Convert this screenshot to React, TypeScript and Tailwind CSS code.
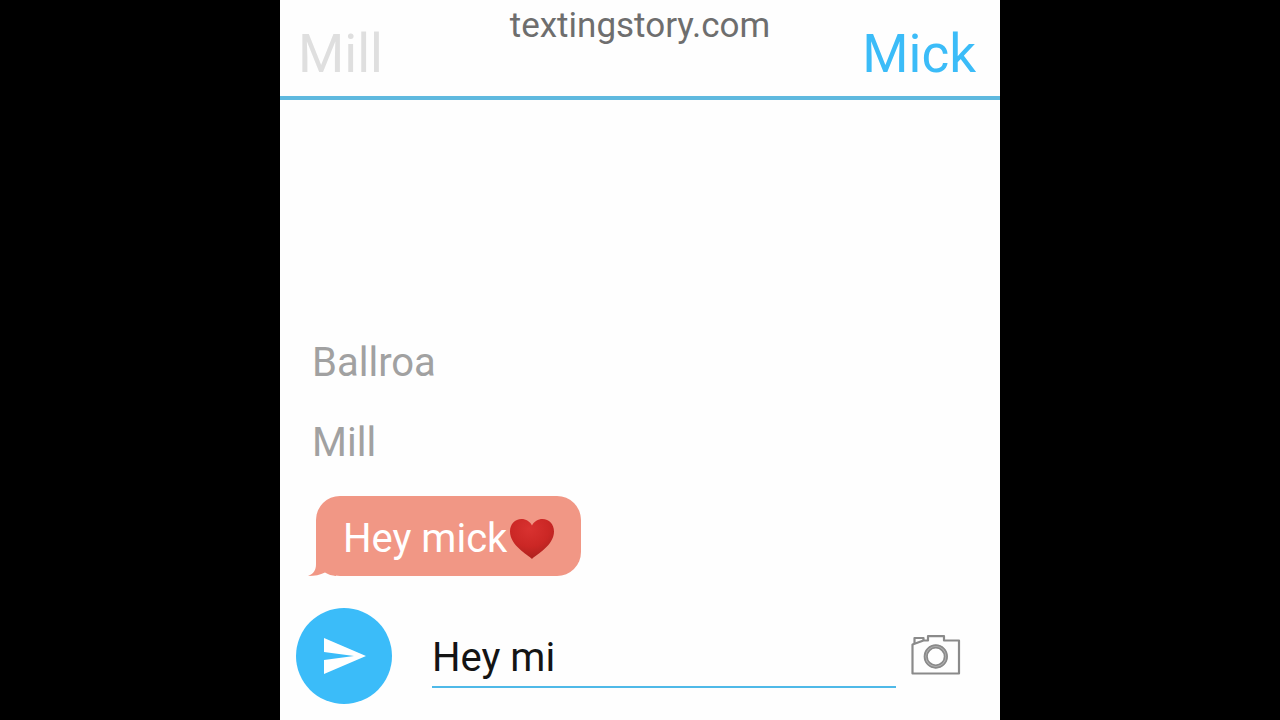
import { useState } from 'react';

const messages = [
  { id: 1, type: 'label', text: 'Ballroa' },
  { id: 2, type: 'label', text: 'Mill' },
  { id: 3, type: 'bubble', text: 'Hey mick' },
];

function HeartIcon() {
  return (
    <svg viewBox="0 0 44 40" className="w-11 h-10 shrink-0" role="img" aria-label="red heart">
      <defs>
        <radialGradient id="heart" cx="0.45" cy="0.25" r="0.8">
          <stop offset="0" stopColor="#d93230" />
          <stop offset="0.55" stopColor="#cb2725" />
          <stop offset="1" stopColor="#a8201d" />
        </radialGradient>
      </defs>
      <path
        d="M22 40C17.5 35.5 0 26.5 0 12.5C0 5 5 0 11.5 0C16 0 20 2.5 22 6.5C24 2.5 28 0 32.5 0C39 0 44 5 44 12.5C44 26.5 26.5 35.5 22 40Z"
        fill="url(#heart)"
      />
    </svg>
  );
}

function SendIcon() {
  return (
    <svg viewBox="0 0 24 24" className="size-12" fill="#ffffff" aria-hidden="true">
      <path d="M2 21L23 12L2 3V10L17 12L2 14Z" />
    </svg>
  );
}

function CameraIcon() {
  return (
    <svg viewBox="0 0 50 40" className="w-[50px] h-10" fill="none" stroke="#8a8a8a" strokeWidth="2.2" strokeLinejoin="round" aria-hidden="true">
      <path d="M1.5 9.5L12.5 5.5H17V1.2H33V5.5H48V38.5H1.5Z" />
      <path d="M3.5 8.5V3H12.5V5.5" />
      <circle cx="24.8" cy="21.5" r="10.2" stroke="#b4b4b4" strokeWidth="3" />
      <circle cx="24.8" cy="21.5" r="11.3" strokeWidth="1.7" />
      <circle cx="24.8" cy="21.5" r="8.8" strokeWidth="1.7" />
    </svg>
  );
}

function Bubble({ text }: { text: string }) {
  return (
    <div className="relative ml-1 flex items-center rounded-3xl bg-[#f19785] pt-[18px] pr-6 pb-3 pl-[27px] text-white">
      <svg viewBox="0 0 28 24" className="absolute bottom-0 -left-2 h-6 w-7" aria-hidden="true">
        <path d="M8 0V12C8 18 6 21.5 0 24C7 24 12 23 17 20.5C20 22.5 24 23.7 28 24V0Z" fill="#f19785" />
      </svg>
      <span className="relative whitespace-nowrap text-[40px] leading-[50px]">{text}</span>
      <span className="relative flex items-center px-[3px]">
        <HeartIcon />
      </span>
    </div>
  );
}

export default function App() {
  const [draft, setDraft] = useState('Hey mi');

  return (
    <div className="min-h-screen bg-black font-[Roboto,sans-serif]">
      <div className="mx-auto flex min-h-screen w-full max-w-[720px] flex-col bg-[#fefefe]">
        <header className="grid grid-cols-[1fr_auto_1fr] items-start border-b-4 border-[#5fb9df] px-[18px] pt-[5px] pb-[9px]">
          <button type="button" className="mt-4 justify-self-start text-[53px] leading-[66px] text-[#dfdfdf]">
            Mill
          </button>
          <h1 className="text-[35px] leading-[42px] text-[#6e6e6e]">textingstory.com</h1>
          <button type="button" className="mt-4 mr-1.5 justify-self-end text-[53px] leading-[66px] text-[#3bbcf8]">
            Mick
          </button>
        </header>

        <main className="flex flex-1 flex-col items-start justify-end gap-[26px] px-8 pb-4">
          {messages.map((message) =>
            message.type === 'bubble' ? (
              <Bubble key={message.id} text={message.text} />
            ) : (
              <p key={message.id} className="text-[40px] leading-[54px] text-[#a1a1a1]">
                {message.text}
              </p>
            )
          )}
        </main>

        <form className="flex items-end py-4 pr-10 pl-4" onSubmit={(e) => e.preventDefault()}>
          <button type="submit" aria-label="Send" className="flex size-24 shrink-0 items-center justify-center rounded-full bg-[#3bbcf9]">
            <SendIcon />
          </button>
          <input
            type="text"
            aria-label="Message"
            value={draft}
            onChange={(e) => setDraft(e.target.value)}
            className="mb-4 ml-10 h-14 min-w-0 flex-1 border-b-2 border-[#4fb9e8] pb-1 text-[40px] leading-[48px] text-[#141414] outline-none"
          />
          <button type="button" aria-label="Add photo" className="-mr-px mb-[29px] ml-[15px] shrink-0">
            <CameraIcon />
          </button>
        </form>
      </div>
    </div>
  );
}
